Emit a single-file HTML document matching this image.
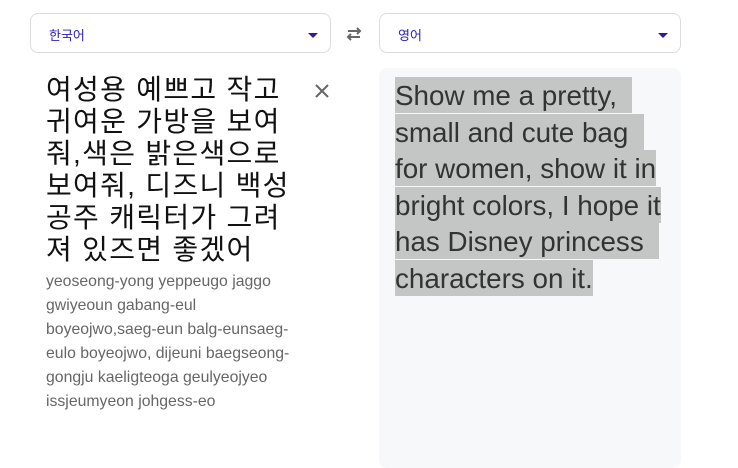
<!DOCTYPE html>
<html><head><meta charset="utf-8"><style>
body{margin:0;width:738px;height:460px;background:#fff;position:relative;overflow:hidden;font-family:"Liberation Sans","Noto Sans CJK KR",sans-serif}
.sel{position:absolute;top:13px;height:40px;border:1px solid #dcdcdc;border-radius:8px;background:#fff;box-sizing:border-box}
.sel span{position:absolute;left:18px;top:11px;font-size:13px;color:#2a1cc4}
.sel i{position:absolute;right:12px;top:19px;width:0;height:0;border-left:5px solid transparent;border-right:5px solid transparent;border-top:5px solid #2a1c9c}
.ko{position:absolute;left:46px;top:74px;font-size:28px;line-height:32px;color:#111;white-space:nowrap;letter-spacing:1.3px}
.rom{position:absolute;left:46px;top:270px;font-size:15.8px;line-height:24px;color:#666;white-space:nowrap}
.out{position:absolute;left:379px;top:68px;width:302px;height:400px;background:#f7f8fa;border-radius:8px}
.en{position:absolute;left:395px;top:78px;font-size:27.8px;line-height:36.5px;color:#333;white-space:nowrap}
.en span{background:#c4c5c5;padding:3px 0 2px}
</style></head><body>
<div class="sel" style="left:30px;width:301px"><span>한국어</span><i></i></div>
<svg style="position:absolute;left:344px;top:26px" width="20" height="16" viewBox="0 0 20 16"><path d="M4 5h12M13 2l3 3-3 3M16 11H4M7 8l-3 3 3 3" stroke="#666" stroke-width="2" fill="none"/></svg>
<div class="sel" style="left:379px;width:302px"><span>영어</span><i></i></div>
<div class="ko">여성용 예쁘고 작고<br>귀여운 가방을 보여<br>줘,색은 밝은색으로<br>보여줘, 디즈니 백성<br>공주 캐릭터가 그려<br>져 있즈면 좋겠어</div>
<svg style="position:absolute;left:314px;top:83px" width="16" height="16" viewBox="0 0 16 16"><path d="M2 2l12 12M14 2L2 14" stroke="#666" stroke-width="2"/></svg>
<div class="rom">yeoseong-yong yeppeugo jaggo<br>gwiyeoun gabang-eul<br>boyeojwo,saeg-eun balg-eunsaeg-<br>eulo boyeojwo, dijeuni baegseong-<br>gongju kaeligteoga geulyeojyeo<br>issjeumyeon johgess-eo</div>
<div class="out"></div>
<div class="en"><span>Show me a pretty,&nbsp;&nbsp;</span><br><span>small and cute bag&nbsp;&nbsp;</span><br><span>for women, show it in</span><br><span>bright colors, I hope it</span><br><span>has Disney princess&nbsp;&nbsp;</span><br><span>characters on it.</span></div>
</body></html>
